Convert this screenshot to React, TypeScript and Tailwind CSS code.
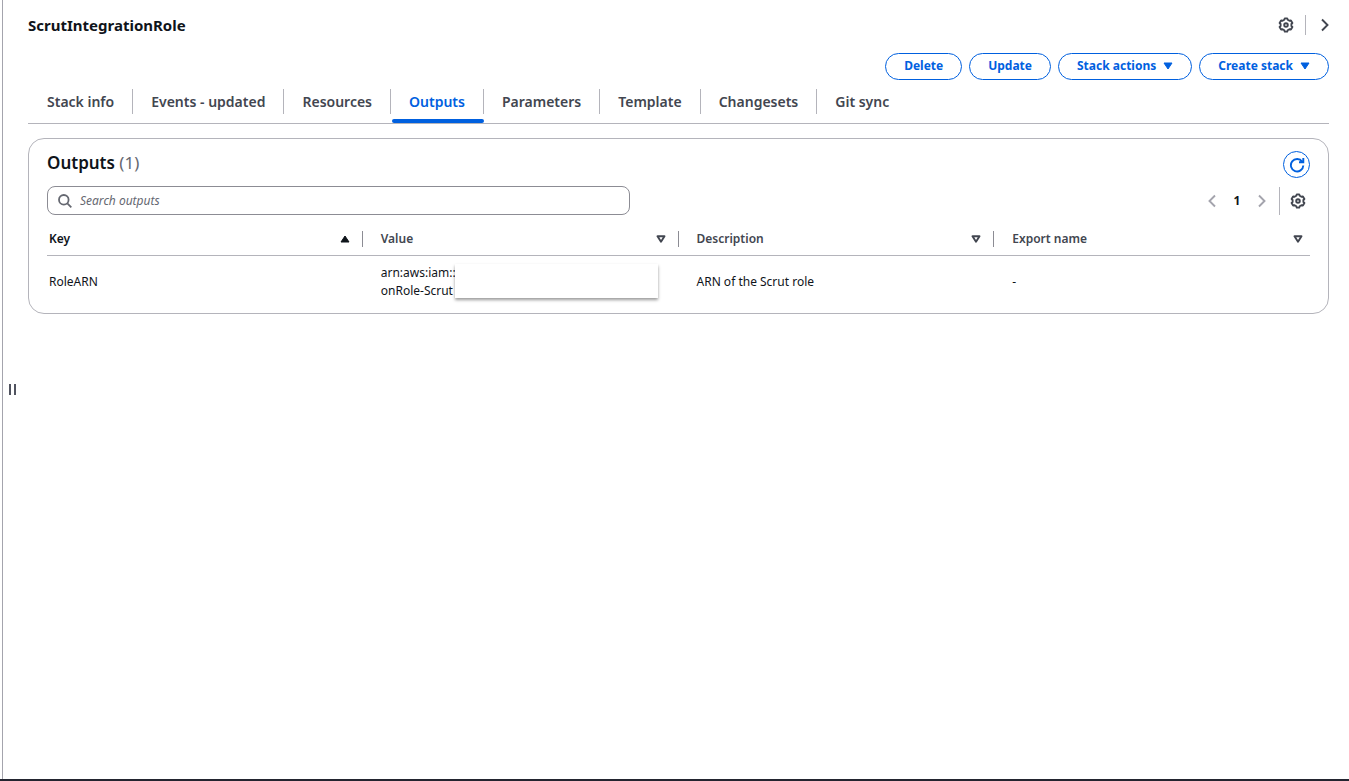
import React from "react";

const tabs = [
  "Stack info",
  "Events - updated",
  "Resources",
  "Outputs",
  "Parameters",
  "Template",
  "Changesets",
  "Git sync",
];

function GearIcon() {
  return (
    <svg viewBox="0 0 16 16" className="size-4" fill="none" stroke="currentColor" strokeWidth="1.9" strokeLinejoin="round" aria-hidden="true">
      <path d="M6.3 2.8 6.8 1.4h2.4l.5 1.4 1.7 1 1.5-.3 1.5 2.5-1 1v2l1 1-1.5 2.5-1.5-.3-1.7 1-.5 1.4H6.8l-.5-1.4-1.7-1-1.5.3L1.6 10l1-1V7l-1-1 1.5-2.5 1.5.3z" />
      <circle cx="8" cy="8" r="1.8" />
    </svg>
  );
}

function Chevron({ left = false }: { left?: boolean }) {
  return (
    <svg viewBox="0 0 16 16" className="size-4" fill="none" stroke="currentColor" strokeWidth="1.9" aria-hidden="true">
      <path d={left ? "M11 2.5 5.5 8l5.5 5.5" : "M5 2.5 10.5 8 5 13.5"} />
    </svg>
  );
}

function SolidCaret({ up = false }: { up?: boolean }) {
  return (
    <svg viewBox="0 0 10 8" className="h-2 w-[10px]" fill="currentColor" stroke="currentColor" strokeLinejoin="round" aria-hidden="true">
      <path d={up ? "M1 7h8L5 1z" : "M1 1h8L5 7z"} />
    </svg>
  );
}

function HollowCaret() {
  return (
    <svg viewBox="0 0 10 8" className="h-2 w-[10px]" fill="none" stroke="currentColor" strokeWidth="1.9" strokeLinejoin="round" aria-hidden="true">
      <path d="M1.5 1.2h7L5 6.7z" />
    </svg>
  );
}

function PillButton({ children, menu = false }: { children: React.ReactNode; menu?: boolean }) {
  return (
    <button
      type="button"
      className="flex h-[27px] items-center gap-[7px] rounded-full border border-[#0060df] px-[18px] pb-px text-[12px] font-bold text-[#0060df]"
    >
      {children}
      {menu && <SolidCaret />}
    </button>
  );
}

function HeaderCell({ label, sorted = false, last = false }: { label: string; sorted?: boolean; last?: boolean }) {
  return (
    <th scope="col" className="p-0 text-left font-semibold">
      <div
        className={`flex h-4 items-center justify-between ${sorted ? "pl-[2px] text-[#0f141a]" : "pl-[18px] text-[#424650]"} ${
          last ? "pr-[7px]" : "border-r border-[#8c8c94] pr-[12px]"
        }`}
      >
        {label}
        <button type="button" aria-label={`Sort by ${label}`}>
          {sorted ? <SolidCaret up /> : <HollowCaret />}
        </button>
      </div>
    </th>
  );
}

export default function App() {
  return (
    <div className="flex min-h-screen flex-col bg-white font-['Noto_Sans',sans-serif] text-[#0f141a]">
      <div className="ml-[2px] flex flex-1 border-l border-[#a4a4ad]">
        <button type="button" aria-label="Resize panel" className="flex w-[25px] items-center gap-[3px] self-stretch pb-px pl-[6px]">
          <span className="h-[11px] w-[2px] bg-[#50535f]" />
          <span className="h-[11px] w-[2px] bg-[#50535f]" />
        </button>
        <main className="min-w-0 flex-1 pr-5">
          <header className="flex h-[53px] items-center justify-between pb-[3px]">
            <h1 className="text-[15px] font-bold">ScrutIntegrationRole</h1>
            <div className="flex items-center text-[#424650]">
              <button type="button" aria-label="Settings">
                <GearIcon />
              </button>
              <span className="mx-[11px] h-5 w-px bg-[#b4b4bb]" />
              <button type="button" aria-label="Collapse panel" className="-mr-1">
                <Chevron />
              </button>
            </div>
          </header>

          <div className="flex justify-end gap-[7px]">
            <PillButton>Delete</PillButton>
            <PillButton>Update</PillButton>
            <PillButton menu>Stack actions</PillButton>
            <PillButton menu>Create stack</PillButton>
          </div>

          <div role="tablist" className="flex h-11 items-stretch border-b border-[#b4b4bb] pl-px">
            {tabs.map((tab) => {
              const active = tab === "Outputs";
              return (
                <button
                  key={tab}
                  type="button"
                  role="tab"
                  aria-selected={active}
                  className={`group relative flex items-center text-[14px] font-semibold ${active ? "text-[#0060df]" : "text-[#424650]"}`}
                >
                  <span className="flex h-[25px] items-center border-r border-[#b4b4bb] px-[18px] group-last:border-r-0">{tab}</span>
                  {active && <span className="absolute left-px right-0 bottom-0 h-1 rounded-sm bg-[#0060df]" />}
                </button>
              );
            })}
          </div>

          <section className="mt-[14px] rounded-2xl border border-[#b4b4bb] px-[18px] pb-1 pt-3">
            <div className="flex items-start justify-between">
              <h2 className="text-[17px] leading-6 font-semibold">
                Outputs <span className="font-normal text-[#656871]">(1)</span>
              </h2>
              <button
                type="button"
                aria-label="Refresh"
                className="flex size-[27px] items-center justify-center rounded-full border border-[#0060df] text-[#0060df]"
              >
                <svg viewBox="0 0 16 16" className="size-4" fill="none" stroke="currentColor" strokeWidth="1.9" aria-hidden="true">
                  <path d="M14.3 8.5A6.200 6.200 0 1 1 13.2 4.700M14.300 1v4.300H10" />
                </svg>
              </button>
            </div>

            <div className="mt-2 flex items-center justify-between">
              <label className="flex h-[29px] w-[583px] items-center gap-[7px] rounded-lg border border-[#8c8c94] pl-[9px] pr-2 text-[#656871]">
                <svg viewBox="0 0 16 16" className="size-4" fill="none" stroke="currentColor" strokeWidth="1.8" aria-hidden="true">
                  <circle cx="6.8" cy="6.8" r="4.8" />
                  <path d="m10.3 10.3 4 4" />
                </svg>
                <input
                  type="search"
                  aria-label="Search outputs"
                  placeholder="Search outputs"
                  className="min-w-0 flex-1 bg-transparent text-[12px] outline-none placeholder:italic placeholder:text-[#656871]"
                />
              </label>
              <div className="flex items-center text-[#a4a4ad]">
                <button type="button" aria-label="Previous page">
                  <Chevron left />
                </button>
                <button type="button" className="w-[34px] text-center text-[12px] font-bold text-[#0f141a]">
                  1
                </button>
                <button type="button" aria-label="Next page">
                  <Chevron />
                </button>
                <span className="ml-[9px] mr-[10px] h-7 w-px bg-[#b4b4bb]" />
                <button type="button" aria-label="Preferences" className="mr-1 text-[#424650]">
                  <GearIcon />
                </button>
              </div>
            </div>

            <table className="mt-2 w-full table-fixed border-collapse text-[12px]">
              <thead>
                <tr className="h-8 border-b border-[#b4b4bb]">
                  <HeaderCell label="Key" sorted />
                  <HeaderCell label="Value" />
                  <HeaderCell label="Description" />
                  <HeaderCell label="Export name" last />
                </tr>
              </thead>
              <tbody>
                <tr className="h-[53px] leading-[18px]">
                  <td className="p-0 pl-[2px]">RoleARN</td>
                  <td className="relative p-0 pl-[18px]">
                    arn:aws:iam::
                    <br />
                    onRole-Scrut
                    <span className="absolute left-[92px] top-[8px] h-[34px] w-[203px] bg-white shadow-[0_2px_3px_rgba(0,0,0,0.4)]" />
                  </td>
                  <td className="p-0 pl-[18px]">ARN of the Scrut role</td>
                  <td className="p-0 pl-[18px]">-</td>
                </tr>
              </tbody>
            </table>
            <div className="h-px" />
          </section>
        </main>
      </div>
      <div className="h-[2px] bg-[#232530]" />
    </div>
  );
}
